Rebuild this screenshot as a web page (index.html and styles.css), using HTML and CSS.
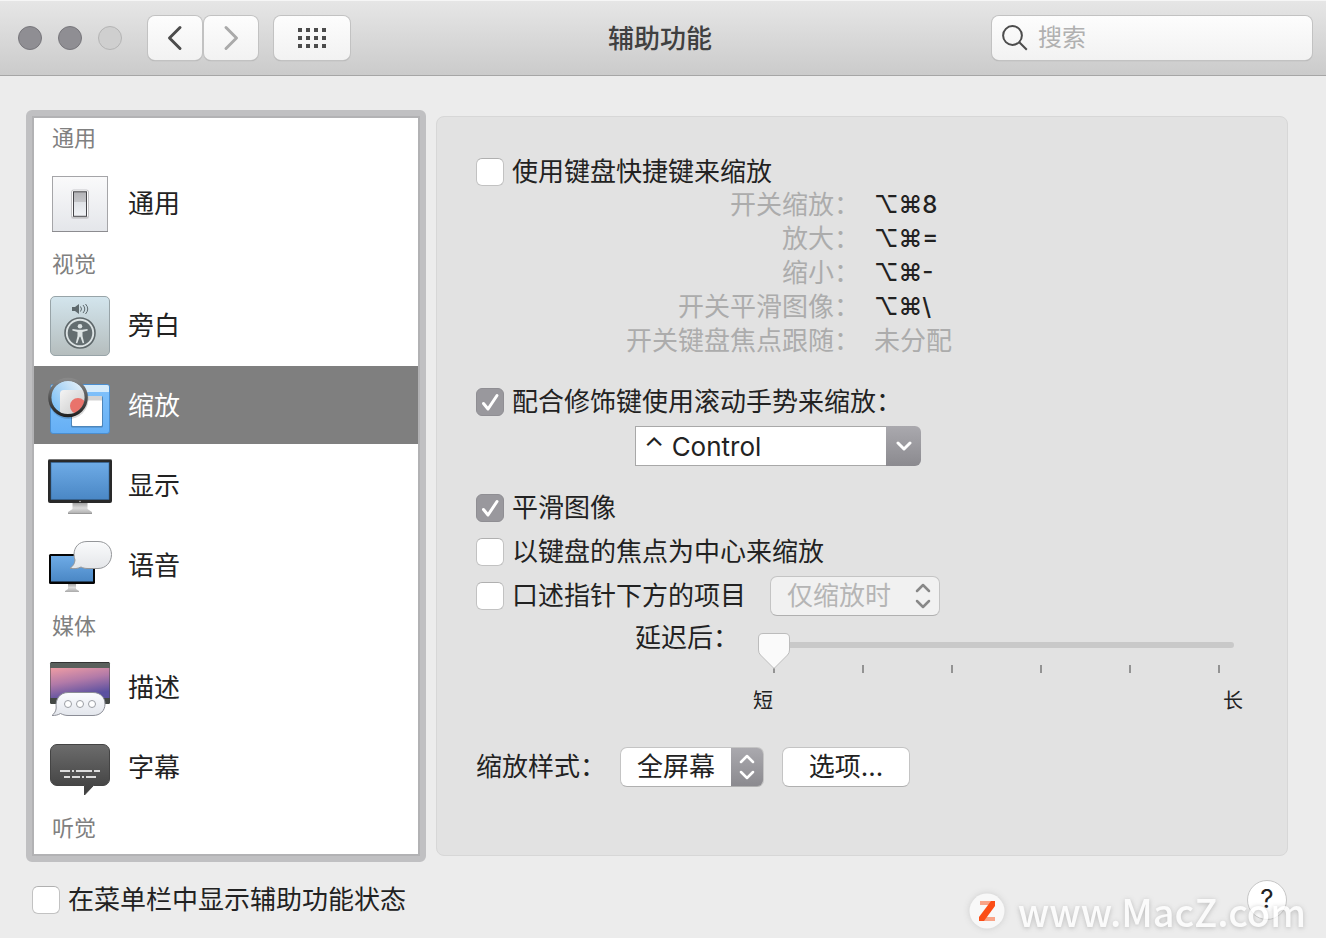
FILE: index.html
```html
<!DOCTYPE html>
<html lang="zh-CN">
<head>
<meta charset="utf-8">
<title>辅助功能</title>
<link rel="stylesheet" href="styles.css">
</head>
<body>
<header class="toolbar">
  <div class="toolbar-left">
    <div class="lights">
      <button class="light" aria-label="关闭"></button>
      <button class="light" aria-label="最小化"></button>
      <button class="light light-off" aria-label="缩放窗口" disabled></button>
    </div>
    <div class="nav-pair">
      <button class="tool" aria-label="后退"><svg width="16" height="26" viewBox="0 0 16 26" fill="none" stroke="#4c4c4c" stroke-width="3" stroke-linecap="round" stroke-linejoin="round"><path d="M13 2.500 2.500 13 13 23.500"/></svg></button>
      <button class="tool" aria-label="前进" disabled><svg width="16" height="26" viewBox="0 0 16 26" fill="none" stroke="#aaa" stroke-width="3" stroke-linecap="round" stroke-linejoin="round"><path d="M3 2.500 13.500 13 3 23.500"/></svg></button>
    </div>
    <button class="tool tool-wide" aria-label="显示全部"><svg width="28" height="20" viewBox="0 0 28 20" fill="#4c4c4c"><path d="M0 0h4v4H0zM8 0h4v4H8zM16 0h4v4h-4zM24 0h4v4h-4zM0 8h4v4H0zM8 8h4v4H8zM16 8h4v4h-4zM24 8h4v4h-4zM0 16h4v4H0zM8 16h4v4H8zM16 16h4v4h-4zM24 16h4v4h-4z"/></svg></button>
  </div>
  <h1 class="title">辅助功能</h1>
  <label class="search">
    <svg width="26" height="26" viewBox="0 0 26 26" fill="none" stroke="#4c4c4c" stroke-width="2"><circle cx="10.500" cy="10.500" r="9.400"/><path d="m17.300 17.300 7.500 7.500"/></svg>
    <input type="search" placeholder="搜索" aria-label="搜索">
  </label>
</header>

<main class="content">
  <nav class="sidebar" aria-label="辅助功能类别">
    <h2 class="group">通用</h2>
    <button class="item">
      <svg width="64" height="64" viewBox="0 0 64 64">
        <defs>
          <linearGradient id="plate" x2="0" y2="1"><stop stop-color="#fafafb"/><stop offset="1" stop-color="#e4e6ea"/></linearGradient>
          <linearGradient id="rocker" x2="0" y2="1"><stop stop-color="#b3b3b6"/><stop offset=".4" stop-color="#c4c5c8"/><stop offset=".42" stop-color="#dfe2e6"/><stop offset="1" stop-color="#f1f3f6"/></linearGradient>
        </defs>
        <rect x="4.500" y="4.500" width="55" height="55" fill="url(#plate)" stroke="#a5a5a8"/>
        <path d="M4 59.500h56" stroke="#8c8c90"/>
        <rect x="23" y="18.500" width="18" height="28.500" rx="2.500" fill="#cfcfd2"/>
        <rect x="23.500" y="18" width="17" height="27.500" rx="2" fill="#fdfdfd" stroke="#b4b4b7" stroke-width=".7"/>
        <rect x="25.500" y="19.800" width="13" height="24.500" fill="url(#rocker)" stroke="#444448" stroke-width="1"/>
      </svg>通用
    </button>

    <h2 class="group">视觉</h2>
    <button class="item">
      <svg width="64" height="64" viewBox="0 0 64 64">
        <defs><linearGradient id="voice" x2="0" y2="1"><stop stop-color="#d3e5ed"/><stop offset="1" stop-color="#b5bdbd"/></linearGradient></defs>
        <rect x="2.500" y="2.500" width="59" height="59" rx="4.500" fill="url(#voice)" stroke="#98a4a8"/>
        <path d="M24 13h3l4-3v10l-4-3h-3z" fill="#5e696d"/>
        <g fill="none" stroke="#5e696d"><path d="M32.500 12.500q2 2.500 0 5M35 11q3.500 4 0 8M37.500 10q4.500 5 0 10"/></g>
        <circle cx="32" cy="39" r="15" fill="#dce3e4" stroke="#5e676a" stroke-width="1.600"/>
        <circle cx="32" cy="39" r="12.300" fill="#636d70"/>
        <circle cx="32" cy="32.200" r="2.300" fill="#dce3e4"/>
        <path d="m24.500 35 5.500.8h4l5.500-.8.200 1.500-5.200 1.400v4l1.700 7-1.500.4-2.300-6.500h-.8l-2.300 6.500-1.500-.4 1.700-7v-4l-5.200-1.400z" fill="#dce3e4"/>
      </svg>旁白
    </button>
    <button class="item item-selected" aria-current="page">
      <svg width="64" height="64" viewBox="0 0 64 64">
        <defs>
          <linearGradient id="desk" x2="0" y2="1"><stop stop-color="#83c3fb"/><stop offset="1" stop-color="#65aff5"/></linearGradient>
          <linearGradient id="ring" x2="0" y2="1"><stop stop-color="#888"/><stop offset="1" stop-color="#222"/></linearGradient>
          <linearGradient id="lens" x1="0" y1=".6" x2=".8" y2="0"><stop stop-color="#83c3f6"/><stop offset="1" stop-color="#e3eff8"/></linearGradient>
          <linearGradient id="lens-window" x2="1" y2="1"><stop stop-color="#f4f4f4"/><stop offset="1" stop-color="#bebebe"/></linearGradient>
          <clipPath id="lens-clip"><circle cx="20" cy="23.500" r="17"/></clipPath>
        </defs>
        <rect x="2.500" y="10.500" width="59" height="49" rx="2.500" fill="url(#desk)" stroke="#4b8ecf"/>
        <path d="M3 13a2 2 0 0 1 2-2h54a2 2 0 0 1 2 2v5H3z" fill="#d5ebfb"/>
        <rect x="23" y="22" width="32" height="31.500" rx="1.500" fill="#4d86bb"/>
        <rect x="24" y="22" width="30" height="30" rx="1" fill="#fff"/>
        <path d="M24 22h30v4.500H24z" fill="#d3d3d3"/>
        <circle cx="20.500" cy="25" r="20" fill="#000" opacity=".15"/>
        <g clip-path="url(#lens-clip)"><circle cx="20" cy="23.500" r="17" fill="url(#lens)"/><rect x="12" y="16" width="30" height="30" rx="4" fill="url(#lens-window)"/><circle cx="30" cy="32" r="8" fill="#e9736b"/></g>
        <circle cx="20" cy="23.500" r="18.200" fill="none" stroke="url(#ring)" stroke-width="3.200"/>
      </svg>缩放
    </button>
    <button class="item">
      <svg width="64" height="64" viewBox="0 0 64 64">
        <defs>
          <linearGradient id="screen" x2="0" y2="1"><stop stop-color="#6eabe6"/><stop offset="1" stop-color="#4a87c5"/></linearGradient>
          <linearGradient id="stand" x2="0" y2="1"><stop stop-color="#999"/><stop offset=".5" stop-color="#dcdcdc"/><stop offset="1" stop-color="#aaa"/></linearGradient>
        </defs>
        <path d="M24.500 48h15v7l4.500 3v2H20v-2l4.500-3z" fill="url(#stand)"/><path d="M20 59.500h24" stroke="#999"/>
        <rect y="5" width="64" height="44" rx="2" fill="#292929"/>
        <path d="M1 5.500h62" stroke="#777"/>
        <rect x="3" y="8.500" width="58" height="37" fill="url(#screen)" stroke="#34689d" stroke-width=".6"/>
        <circle cx="32" cy="47.500" r=".8" fill="#bbb"/>
      </svg>显示
    </button>
    <button class="item">
      <svg width="64" height="64" viewBox="0 0 64 64">
        <defs><linearGradient id="bubble" x2="0" y2="1"><stop stop-color="#fafbfc"/><stop offset="1" stop-color="#e4e6e9"/></linearGradient></defs>
        <path d="M20 49h8v6l3 2v1H17v-1l3-2z" fill="url(#stand)"/>
        <rect x="1" y="20" width="46" height="30" rx="1.500" fill="#050505"/>
        <rect x="3" y="22" width="42" height="25.500" fill="url(#screen)"/>
        <path d="M39 7.500h11c8 0 13.500 5.500 13.500 13S58 34.500 50 34.500H40c-3 0-5-.5-7-1.500-3 1.500-7 2.200-11 1.300 3-2 4.800-5 5-8.300a15 15 0 0 1-1-5.500c0-7.500 5-13 13-13z" fill="url(#bubble)" stroke="#949699"/>
      </svg>语音
    </button>

    <h2 class="group">媒体</h2>
    <button class="item">
      <svg width="64" height="64" viewBox="0 0 64 64">
        <defs>
          <linearGradient id="dusk" x2=".35" y2="1"><stop stop-color="#ef9da4"/><stop offset=".5" stop-color="#b27aa8"/><stop offset="1" stop-color="#5a50a0"/></linearGradient>
          <linearGradient id="chat" x2="0" y2="1"><stop stop-color="#fbfcff"/><stop offset="1" stop-color="#e3e6ec"/></linearGradient>
        </defs>
        <rect x="2" y="6" width="60" height="42" rx="1.500" fill="#434744"/>
        <path d="M3 6.500h58" stroke="#333"/><path d="M2 7h60v5H2z" fill="#5a605c"/>
        <path d="M2.500 12h59v30h-59z" fill="url(#dusk)"/>
        <path d="M20 36.500h25c7.500 0 12 5 12 11.500s-4.500 11.500-12 11.500H20c-3 0-5-.8-7.500-2-2.500 1.500-5 2-8.500 2 2.500-2 4-4.500 4.200-7.500C7 43 12 36.500 20 36.500z" fill="url(#chat)" stroke="#8b8d96"/>
        <g fill="#fff" stroke="#9b9ea4"><circle cx="20" cy="48" r="3.500"/><circle cx="32" cy="48" r="3.500"/><circle cx="44" cy="48" r="3.500"/></g>
      </svg>描述
    </button>
    <button class="item">
      <svg width="64" height="64" viewBox="0 0 64 64">
        <defs><linearGradient id="caption" x2="0" y2="1"><stop stop-color="#6c6c6c"/><stop offset="1" stop-color="#3d3d3d"/></linearGradient></defs>
        <path d="M9 8.500h46a6.500 6.500 0 0 1 6.500 6.500v28a6.500 6.500 0 0 1-6.500 6.500h-9.500L36.500 59v-9.500H9A6.500 6.500 0 0 1 2.500 43V15A6.500 6.500 0 0 1 9 8.500z" fill="url(#caption)" stroke="#444"/>
        <path d="M12 35h10m2 0h2m2 0h16m2 0h6M16 41h6m2 0h8m2 0h2m2 0h10" stroke="#ddd" stroke-width="2"/>
      </svg>字幕
    </button>

    <h2 class="group">听觉</h2>
  </nav>

  <section class="panel" aria-label="缩放">
    <label class="check"><input type="checkbox">使用键盘快捷键来缩放</label>
    <dl class="shortcuts">
      <dt>开关缩放：</dt><dd>⌥⌘8</dd>
      <dt>放大：</dt><dd>⌥⌘=</dd>
      <dt>缩小：</dt><dd>⌥⌘-</dd>
      <dt>开关平滑图像：</dt><dd>⌥⌘\</dd>
      <dt>开关键盘焦点跟随：</dt><dd class="unset">未分配</dd>
    </dl>

    <label class="check"><input type="checkbox" checked>配合修饰键使用滚动手势来缩放：</label>
    <div class="combo">
      <input type="text" value="⌃ Control" aria-label="修饰键">
      <button aria-label="选择修饰键"><svg width="16" height="10" viewBox="0 0 16 10" fill="none" stroke="#fff" stroke-width="3" stroke-linecap="round" stroke-linejoin="round"><path d="m2 2 6 6 6-6"/></svg></button>
    </div>

    <div class="options">
      <label class="check"><input type="checkbox" checked>平滑图像</label>
      <label class="check"><input type="checkbox">以键盘的焦点为中心来缩放</label>
    </div>
    <div class="speak">
      <label class="check"><input type="checkbox">口述指针下方的项目</label>
      <select class="popup popup-disabled" aria-label="口述时机" disabled><option>仅缩放时</option></select>
    </div>
    <div class="delay">
      <label for="delay">延迟后：</label>
      <div class="slider">
        <input id="delay" type="range" min="0" max="5" value="0">
        <div class="ticks"><i></i><i></i><i></i><i></i><i></i><i></i></div>
        <div class="ends"><span>短</span><span>长</span></div>
      </div>
    </div>

    <div class="style-row">
      <label for="zoom-style">缩放样式：</label>
      <select id="zoom-style" class="popup popup-active"><option>全屏幕</option></select>
      <button class="push">选项...</button>
    </div>
  </section>
</main>

<footer class="footer">
  <label class="check"><input type="checkbox">在菜单栏中显示辅助功能状态</label>
  <button class="help" aria-label="帮助">?</button>
</footer>

<div class="watermark">
  <svg width="36" height="36" viewBox="0 0 36 36" fill="none"><circle cx="18" cy="18" r="17.500" fill="#f8f8f8"/><path d="M11 10h15M11 26h15" stroke="#f9a488" stroke-width="4"/><path d="M22 8h4v5L15 28h-5v-4z" fill="#fb4d16"/></svg>
  <span>www.MacZ.com</span>
</div>
</body>
</html>
```
FILE: styles.css
```css
* {
  box-sizing: border-box;
}

body {
  margin: 0;
  min-height: 100vh;
  display: flex;
  flex-direction: column;
  position: relative;
  background: #ececec;
  color: #222;
  font: 26px/32px Inter, "Noto Sans CJK SC", sans-serif;
}

button,
input,
select {
  margin: 0;
  font: inherit;
  color: inherit;
}

h1,
h2,
dl,
dd {
  margin: 0;
  font-weight: 400;
}

svg {
  display: block;
  flex: none;
}

/* Toolbar */
.toolbar {
  display: grid;
  grid-template-columns: 1fr auto 1fr;
  align-items: center;
  height: 76px;
  padding: 0 14px 0 18px;
  border-top: 1px solid #f6f6f6;
  border-bottom: 1px solid #a6a6a6;
  background: linear-gradient(#e6e6e6, #cbcbcb);
}

.toolbar-left,
.lights,
.nav-pair {
  display: flex;
  align-items: center;
}

.lights {
  gap: 16px;
  margin-right: 26px;
}

.light {
  width: 24px;
  height: 24px;
  padding: 0;
  border: 1px solid #77767b;
  border-radius: 50%;
  background: #8f8e93;
}

.light-off {
  border-color: #b4b4b4;
  background: #cfcfcf;
}

.nav-pair {
  gap: 2px;
  margin-right: 16px;
}

.tool {
  display: grid;
  place-items: center;
  width: 54px;
  height: 44px;
  padding: 0;
  border: 0;
  border-radius: 7px;
  background: linear-gradient(#fdfdfd, #f2f2f2);
  box-shadow: 0 0 0 1px #c2c2c2, 0 1px 1px #999;
}

.tool-wide {
  width: 76px;
}

.title {
  margin-right: 10px;
  padding-top: 2px;
  font-size: 26px;
  font-weight: 500;
  color: #404040;
}

.search {
  justify-self: end;
  display: flex;
  align-items: center;
  gap: 10px;
  width: 320px;
  height: 44px;
  padding: 0 10px;
  border-radius: 7px;
  background: linear-gradient(#fdfdfd, #f2f2f2);
  box-shadow: 0 0 0 1px #c2c2c2, 0 1px 1px #999;
}

.search input {
  flex: 1;
  min-width: 0;
  padding: 0;
  border: 0;
  outline: 0;
  background: none;
  font-size: 24px;
}

.search input::placeholder {
  color: #b0b0b0;
}

/* Main area */
.content {
  flex: 1;
  display: flex;
  gap: 10px;
  padding: 34px 38px 0 26px;
}

.sidebar {
  flex: none;
  width: 400px;
  padding: 2px;
  border: 6px solid #c0c0c2;
  border-radius: 6px;
  background: #fff;
  box-shadow: inset 0 0 0 2px #b2b2b4;
}

.group {
  padding: 0 18px 2px;
  font-size: 22px;
  line-height: 40px;
  color: #808080;
}

.group:first-child {
  padding-bottom: 6px;
}

.item {
  display: flex;
  align-items: center;
  gap: 16px;
  width: 100%;
  height: 78px;
  margin-bottom: 2px;
  padding: 2px 14px 0;
  border: 0;
  background: none;
  text-align: left;
}

.item-selected {
  background: #7f7f7f;
  color: #fff;
}

.panel {
  flex: 1;
  min-width: 0;
  margin: 6px 0;
  padding: 39px 44px 39px 39px;
  border: 1px solid #d7d7d7;
  border-radius: 8px;
  background: #e2e2e2;
}

/* Check boxes */
.check {
  display: flex;
  align-items: center;
  gap: 8px;
  width: fit-content;
}

.check input {
  appearance: none;
  flex: none;
  width: 28px;
  height: 28px;
  border: 1px solid #c2c2c2;
  border-top-color: #b0b0b0;
  border-radius: 6px;
  background: #fff;
}

.check input:checked {
  border-color: #8f8e93;
  background: #99989d url("data:image/svg+xml,%3Csvg xmlns='http://www.w3.org/2000/svg' viewBox='0 0 26 26'%3E%3Cpath d='M6.500 14.500 11 20 20 6.500' fill='none' stroke='%23fff' stroke-width='3' stroke-linecap='round' stroke-linejoin='round'/%3E%3C/svg%3E");
}

.shortcuts {
  display: grid;
  grid-template-columns: 384px 1fr;
  column-gap: 14px;
  margin-bottom: 28px;
  line-height: 34px;
}

.shortcuts dt {
  text-align: right;
  color: #acacac;
}

.shortcuts dd {
  font-size: 24px;
  font-weight: 500;
}

.shortcuts .unset {
  font-size: 26px;
  font-weight: 400;
  color: #acacac;
}

.combo {
  display: flex;
  width: 286px;
  height: 40px;
  margin: 8px 0 26px 159px;
}

.combo input {
  flex: 1;
  min-width: 0;
  padding: 2px 8px 0;
  border: 1px solid #a8a8a8;
  border-right: 0;
  background: #fff;
}

.combo button {
  display: grid;
  place-items: center;
  width: 35px;
  padding: 0;
  border: 0;
  border-radius: 0 6px 6px 0;
  background: linear-gradient(#aaa9ae, #8b8a8f);
}

.options {
  display: grid;
  gap: 12px;
}

.speak {
  display: flex;
  align-items: center;
  gap: 24px;
  margin-top: 8px;
}

.popup {
  appearance: none;
  height: 40px;
  padding: 0 16px;
  border: 1px solid #c4c4c4;
  border-bottom-color: #b0b0b0;
  border-radius: 7px;
  background-repeat: no-repeat;
}

.popup-disabled {
  width: 170px;
  opacity: 1;
  color: #b5b5b5;
  background-color: #f1f1f1;
  background-position: right 7px center;
  background-image: url("data:image/svg+xml,%3Csvg xmlns='http://www.w3.org/2000/svg' width='18' height='26'%3E%3Cpath d='m3 8 6-6 6 6M3 18l6 6 6-6' fill='none' stroke='%23888' stroke-width='2.500' stroke-linecap='round' stroke-linejoin='round'/%3E%3C/svg%3E");
}

.popup-active {
  width: 144px;
  background-color: #fff;
  background-position: right center;
  background-image: url("data:image/svg+xml,%3Csvg xmlns='http://www.w3.org/2000/svg' width='32' height='38'%3E%3ClinearGradient id='g' x2='0' y2='1'%3E%3Cstop stop-color='%23aaa9ae'/%3E%3Cstop offset='1' stop-color='%238b8a8f'/%3E%3C/linearGradient%3E%3Cpath d='M0 0h32v38H0z' fill='url(%23g)'/%3E%3Cpath d='m10 14 6-6 6 6M10 24l6 6 6-6' fill='none' stroke='%23fff' stroke-width='2.500' stroke-linecap='round' stroke-linejoin='round'/%3E%3C/svg%3E");
}

/* Delay slider */
.delay {
  display: flex;
  gap: 14px;
  margin: 6px 0 30px 159px;
}

.slider {
  flex: 1;
  min-width: 0;
  padding-top: 11px;
}

.slider input {
  appearance: none;
  display: block;
  width: calc(100% - 14px);
  height: 24px;
  margin: 0 9px 0 5px;
  background: none;
}

.slider input::-webkit-slider-runnable-track {
  height: 6px;
  border-radius: 3px;
  background: #c9c9c9;
}

.slider input::-webkit-slider-thumb {
  appearance: none;
  position: relative;
  width: 32px;
  height: 36px;
  margin-top: -9px;
  background: url("data:image/svg+xml,%3Csvg xmlns='http://www.w3.org/2000/svg' width='32' height='36'%3E%3Cpath d='M5 .500h22q4.500 0 4.500 4.500v12q0 3-2 5L16 35.500 2.500 22q-2-2-2-5V5Q.500.500 5 .500z' fill='%23fafafa' stroke='%23bcbcbc'/%3E%3C/svg%3E");
}

.ticks {
  display: flex;
  justify-content: space-between;
  height: 8px;
  margin: 8px 23px 0 20px;
}

.ticks i {
  width: 2px;
  background: #939393;
}

.ends {
  display: flex;
  justify-content: space-between;
  margin-top: 12px;
  font-size: 20px;
}

.style-row {
  display: flex;
  align-items: center;
}

.style-row .popup {
  margin: 0 18px 0 14px;
}

.push {
  width: 128px;
  height: 40px;
  padding: 0;
  border: 1px solid #c4c4c4;
  border-bottom-color: #b0b0b0;
  border-radius: 7px;
  background: #fff;
}

.footer {
  display: flex;
  align-items: center;
  justify-content: space-between;
  height: 76px;
  padding: 0 39px 0 32px;
}

.help {
  width: 40px;
  height: 40px;
  padding: 0 0 2px;
  border: 1px solid #c6c6c6;
  border-radius: 50%;
  background: #fff;
}

/* Site mark laid over the window corner */
.watermark {
  position: absolute;
  right: 20px;
  bottom: 4px;
  display: flex;
  align-items: center;
  gap: 13px;
  color: #fff;
  font: 500 38px/46px "Noto Sans CJK SC", sans-serif;
  pointer-events: none;
}

.watermark svg {
  filter: drop-shadow(0 0 3px #ccc);
}

.watermark span {
  opacity: .8;
  text-shadow: 0 1px 5px #aaa;
}
```
